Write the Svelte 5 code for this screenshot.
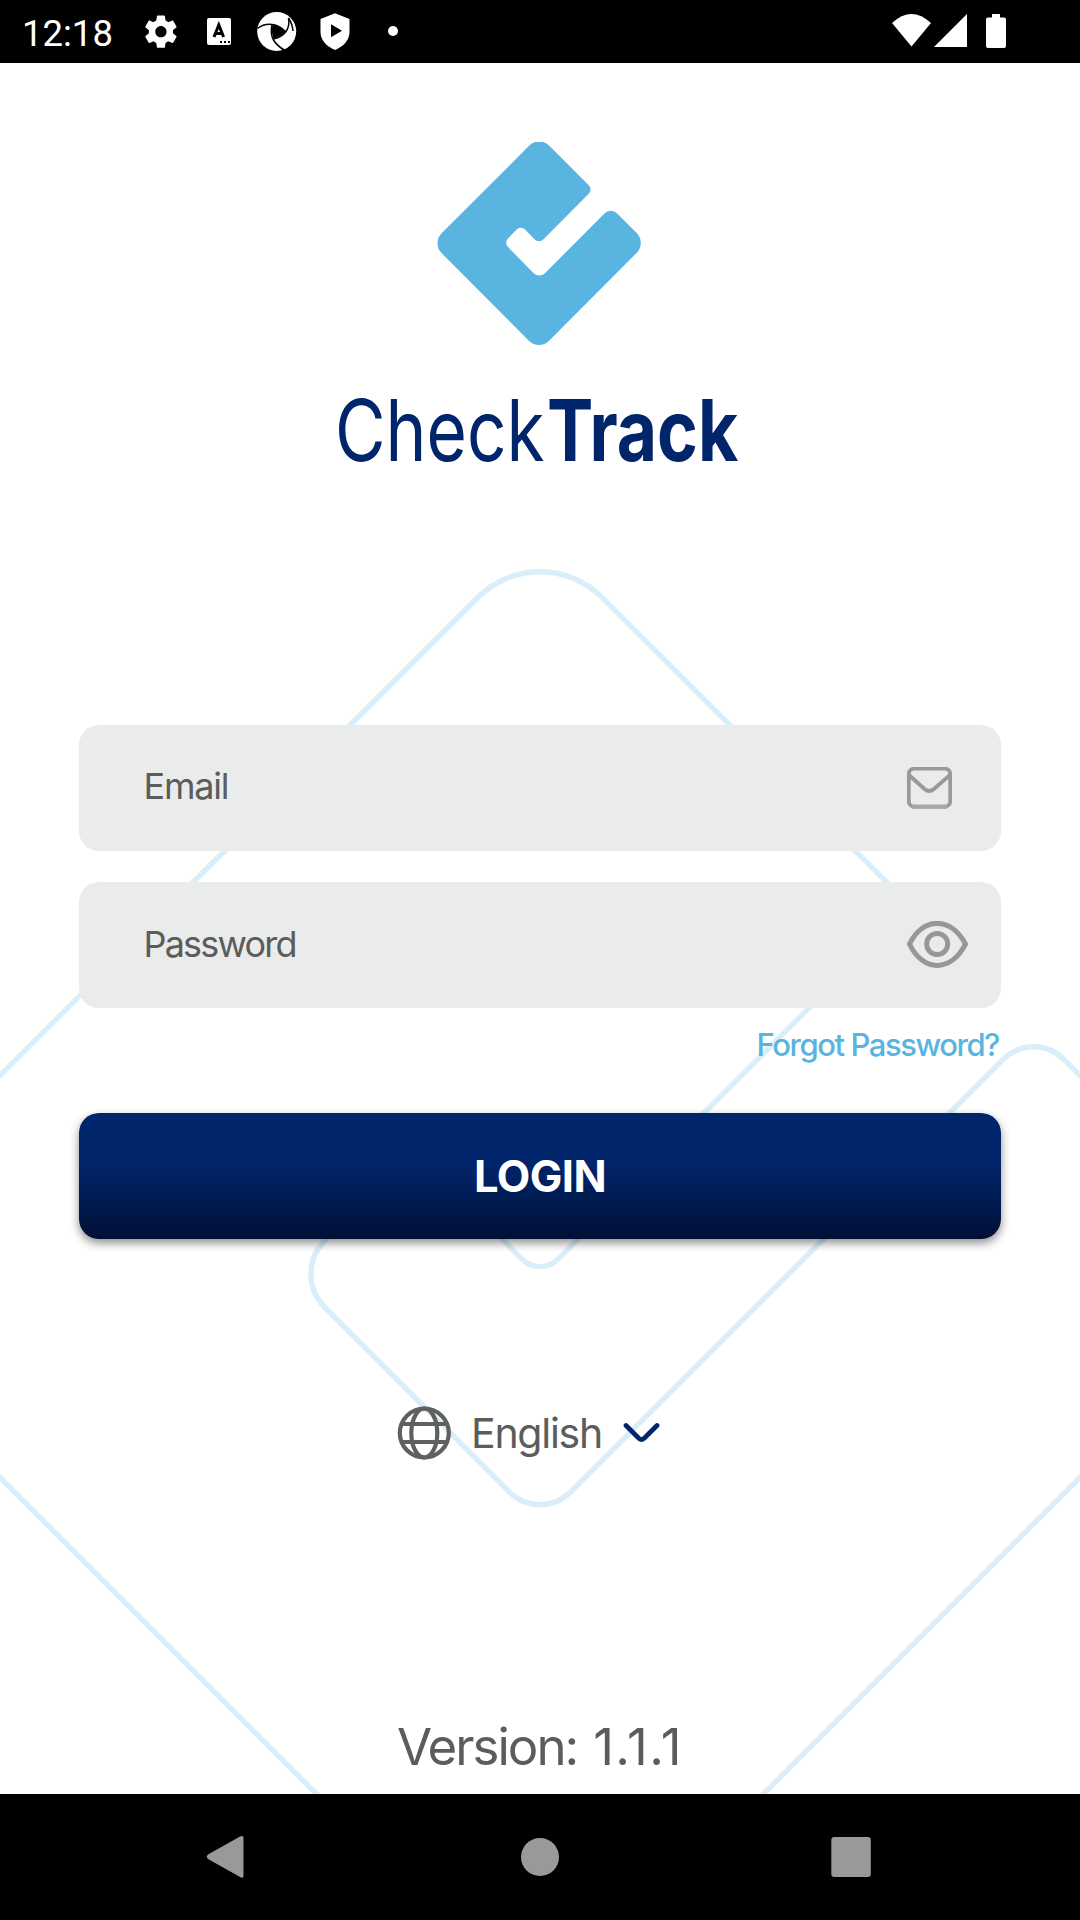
<script>
  // Builds a path through the given [x, y, radius] corners, rounding each one.
  function rounded(points) {
    const n = points.length;
    let d = '';
    for (let i = 0; i < n; i++) {
      const [x, y, r] = points[i];
      const [px, py] = points[(i + n - 1) % n];
      const [nx, ny] = points[(i + 1) % n];
      const a = Math.hypot(px - x, py - y);
      const b = Math.hypot(nx - x, ny - y);
      const sx = x + ((px - x) * r) / a;
      const sy = y + ((py - y) * r) / a;
      const ex = x + ((nx - x) * r) / b;
      const ey = y + ((ny - y) * r) / b;
      const cross = (x - px) * (ny - y) - (y - py) * (nx - x);
      d += `${i ? 'L' : 'M'}${sx} ${sy}A${r} ${r} 0 0 ${cross > 0 ? 1 : 0} ${ex} ${ey}`;
    }
    return d + 'Z';
  }

  const mark = rounded([
    [539.2, 135.7, 14],
    [593, 189.5, 6],
    [539, 243.8, 6],
    [520.8, 225.3, 6],
    [503.8, 242.7, 6],
    [539.2, 279, 8],
    [610.8, 207, 9],
    [646.5, 243, 14],
    [539, 350.8, 14],
    [431.7, 243.2, 14]
  ]);

  const outline = rounded([
    [540, 535.3, 88],
    [910.7, 906.2, 30],
    [540, 1277, 25],
    [414.2, 1151.3, 43],
    [291.5, 1274, 47],
    [540, 1522.5, 43],
    [1033.5, 1029, 43],
    [1281, 1276.5, 88],
    [540, 2017.5, 88],
    [-201, 1276.5, 88]
  ]);
</script>

<div class="screen">
  <header class="status">
    <span class="time">12:18</span>
    <svg class="sys left" viewBox="132 0 288 63" width="288" height="63">
      <g fill="#fff">
        <path transform="translate(141.6 12.4) scale(1.61)" d="M19.43 12.98c.04-.32.07-.64.07-.98s-.03-.66-.07-.98l2.11-1.65c.19-.15.24-.42.12-.64l-2-3.46c-.12-.22-.39-.3-.61-.22l-2.49 1c-.52-.4-1.08-.73-1.69-.98l-.38-2.65C14.46 2.18 14.25 2 14 2h-4c-.25 0-.46.18-.49.42l-.38 2.65c-.61.25-1.17.59-1.69.98l-2.49-1c-.23-.09-.49 0-.61.22l-2 3.46c-.13.22-.07.49.12.64l2.11 1.65c-.04.32-.07.65-.07.98s.03.66.07.98l-2.11 1.65c-.19.15-.24.42-.12.64l2 3.46c.12.22.39.3.61.22l2.49-1c.52.4 1.08.73 1.69.98l.38 2.65c.03.24.24.42.49.42h4c.25 0 .46-.18.49-.42l.38-2.65c.61-.25 1.17-.59 1.69-.98l2.49 1c.23.09.49 0 .61-.22l2-3.46c.12-.22.07-.49-.12-.64l-2.11-1.65zM12 15.5c-1.93 0-3.5-1.57-3.5-3.5s1.57-3.5 3.5-3.5 3.5 1.57 3.5 3.5-1.57 3.5-3.5 3.5z" />
        <rect x="207" y="18" width="24" height="27" rx="2" />
        <circle cx="276.700" cy="31.500" r="19.500" />
        <path d="M335 13.300L349.500 19v13c0 8-6 14.500-14.500 18-8.500-3.500-14.500-10-14.500-18V19z" />
        <circle cx="393" cy="31" r="5" />
      </g>
      <path d="M214 37l4.800-12 4.800 12M215.800 33.500h6" fill="none" stroke="#000" stroke-width="3" />
      <path d="M220 41h2v2h-2zM224 41h2v2h-2zM228 41h2v2h-2z" />
      <path d="M331 24.300v13l11-6.500z" />
      <path d="M272.500 24.500q7 1 13 7-5 5-12 7-2.500-6.500-1-14z" />
      <g fill="none" stroke="#000" stroke-width="1.500">
        <path d="M257.500 28.500Q264 23.500 272 24.500T286 32" />
        <path d="M272 25Q270 34 273.500 40T285 50.500" />
        <path d="M273.500 39Q282 37 286 31.500T288.500 18" />
        <path d="M284 50q4 0 8-4M288.500 18q4 6 4.500 13" />
      </g>
    </svg>
    <svg class="sys right" viewBox="890 0 120 63" width="120" height="63">
      <g fill="#fff">
        <path d="M892 23q19.500-18 39 0L911.500 46.500z" />
        <path d="M934 47L967 14v33z" />
        <path d="M992 14h8v3.500h4q2 0 2 2V46q0 2-2 2h-16q-2 0-2-2V19.500q0-2 2-2h4z" />
      </g>
    </svg>
  </header>

  <main class="content">
    <svg class="backdrop" viewBox="0 63 1080 1731" width="1080" height="1731">
      <path d={outline} fill="none" stroke="#d9eef9" stroke-width="5.400" />
    </svg>

    <svg class="brand" viewBox="330 142 420 348" width="420" height="348">
      <path d={mark} fill="#59b4e0" />
      <text class="light" transform="translate(335 460.500) scale(.815 1)">Check</text>
      <text class="heavy" transform="translate(547 460.500) scale(.817 1)">Track</text>
    </svg>

    <form class="form">
      <div class="field">
        <span class="label email">Email</span>
        <svg viewBox="907 767 45 42" width="45" height="42">
          <g fill="none" stroke="#989999" stroke-width="3.800">
            <rect x="908.800" y="768.600" width="41.400" height="38" rx="5.500" />
            <path d="M909 775l15.500 14q4.700 4 9.400 0L950 775" />
          </g>
          <path d="M912 806.800h35" stroke="#a5a6a6" stroke-width="4" />
        </svg>
      </div>
      <div class="field eye">
        <span class="label password">Password</span>
        <svg viewBox="907 921 61 49" width="61" height="49">
          <g fill="none" stroke="#969797" stroke-width="5">
            <path d="M909.500 944C923 916.500 951 916.500 965.500 944C951 972.500 923 972.500 909.500 944Z" stroke-linejoin="round" />
            <circle cx="937.200" cy="944" r="10.500" />
          </g>
        </svg>
      </div>
      <span class="forgot">Forgot Password?</span>
      <div class="login"><span>LOGIN</span></div>
    </form>

    <div class="language">
      <svg viewBox="397 1406 54 54" width="54" height="54">
        <g fill="none" stroke="#5f6060" stroke-width="4.200">
          <circle cx="424.300" cy="1433" r="24.500" />
          <ellipse cx="424.300" cy="1433" rx="13" ry="24.500" />
          <path d="M401.500 1424h46M401.500 1442h46" />
        </g>
      </svg>
      <span class="lang-name">English</span>
      <svg class="chevron" viewBox="623 1422 38 22" width="38" height="22">
        <path d="M626 1425.500l13 13q2.500 2 5 0l13-13" fill="none" stroke="#01256a" stroke-width="4.800" stroke-linecap="round" />
      </svg>
    </div>

    <div class="version"><span>Version:</span><span class="number">1.1.1</span></div>
  </main>

  <nav class="nav">
    <svg viewBox="180 1794 720 126" width="720" height="126">
      <g fill="#999">
        <path d="M208 1854.500L240.500 1836.300Q243.500 1835 243.500 1838V1875.500Q243.500 1879 240.500 1877.300L208 1859Q205.500 1856.800 208 1854.500Z" />
        <circle cx="540" cy="1857" r="19" />
        <rect x="831.300" y="1837" width="39.500" height="40" rx="3" />
      </g>
    </svg>
  </nav>
</div>

<style>
  :global(body) {
    margin: 0;
  }
  .screen {
    width: 1080px;
    height: 1920px;
    display: flex;
    flex-direction: column;
    overflow: hidden;
    background: #fff;
    font-family: Inter, "Liberation Sans", sans-serif;
    color: #5b5c5c;
  }
  svg {
    display: block;
    flex: none;
  }
  .status {
    height: 63px;
    background: #000;
    display: flex;
    align-items: center;
    box-sizing: border-box;
    padding: 0 70px 0 22px;
  }
  .time {
    width: 110px;
    color: #fff;
    font: 36.500px/63px Roboto, sans-serif;
    padding-top: 3px;
    white-space: nowrap;
  }
  .right {
    margin-left: auto;
  }
  .content {
    position: relative;
    height: 1731px;
    display: flex;
    flex-direction: column;
    align-items: center;
    overflow: hidden;
  }
  .backdrop {
    position: absolute;
    inset: 0;
  }
  .brand,
  .form,
  .language,
  .version {
    position: relative;
  }
  .brand {
    margin-top: 79px;
  }
  .brand text {
    fill: #01256a;
    font-size: 85px;
  }
  .light {
    font-weight: 400;
  }
  .heavy {
    font-weight: 700;
  }
  .form {
    width: 922px;
    margin-top: 234.500px;
    display: flex;
    flex-direction: column;
  }
  .field {
    height: 126px;
    box-sizing: border-box;
    margin-bottom: 31.700px;
    padding: 0 49px 0 64.500px;
    border-radius: 20px;
    background: #eaeceb;
    display: flex;
    align-items: center;
    justify-content: space-between;
  }
  .field.eye {
    padding-right: 33px;
    margin-bottom: 0;
  }
  .label {
    font-size: 36px;
    font-weight: 440;
    margin-top: -3px;
  }
  .email {
    letter-spacing: -1.200px;
  }
  .password {
    letter-spacing: -1.800px;
  }
  .forgot {
    height: 105px;
    box-sizing: border-box;
    padding: 18px 2px 0 0;
    text-align: right;
    font-size: 31px;
    font-weight: 450;
    line-height: 38px;
    letter-spacing: -1.450px;
    color: #59b4e0;
  }
  .login {
    height: 126px;
    border-radius: 20px;
    background: linear-gradient(#01256a 40%, #001036);
    box-shadow: 0 4px 10px rgba(0, 0, 0, 0.45);
    display: flex;
    align-items: center;
    justify-content: center;
    color: #fff;
    font-size: 43.500px;
    font-weight: 700;
    letter-spacing: -0.600px;
  }
  .language {
    width: 286px;
    height: 54px;
    margin-top: 167px;
    display: flex;
    align-items: center;
  }
  .lang-name {
    width: 152px;
    box-sizing: border-box;
    padding-left: 20px;
    font-size: 41px;
    font-weight: 430;
    letter-spacing: -1.250px;
  }
  .chevron {
    margin-left: 20px;
  }
  .version {
    width: 286px;
    margin-top: 256px;
    display: flex;
    justify-content: space-between;
    font-size: 51px;
    font-weight: 430;
    line-height: 62px;
    letter-spacing: -2px;
    white-space: nowrap;
  }
  .number {
    letter-spacing: 1.400px;
  }
  .nav {
    height: 126px;
    background: #000;
    display: flex;
    justify-content: center;
  }
</style>
